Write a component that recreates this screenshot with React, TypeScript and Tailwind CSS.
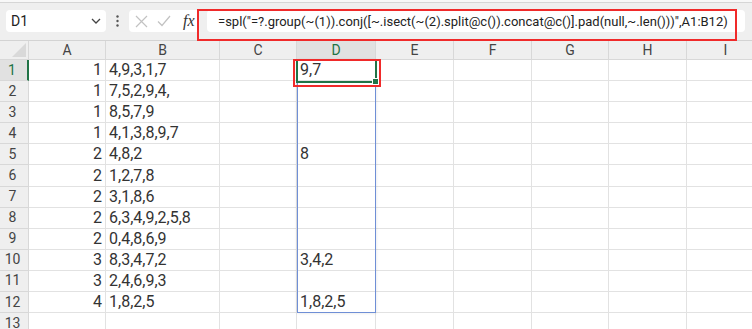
import React from "react";

const cols = ["A", "B", "C", "D", "E", "F", "G", "H", "I"];
const data: [number, string, string][] = [
  [1, "4,9,3,1,7", "9,7"],
  [1, "7,5,2,9,4,", ""],
  [1, "8,5,7,9", ""],
  [1, "4,1,3,8,9,7", ""],
  [2, "4,8,2", "8"],
  [2, "1,2,7,8", ""],
  [2, "3,1,8,6", ""],
  [2, "6,3,4,9,2,5,8", ""],
  [2, "0,4,8,6,9", ""],
  [3, "8,3,4,7,2", "3,4,2"],
  [3, "2,4,6,9,3", ""],
  [4, "1,8,2,5", "1,8,2,5"],
];

const formula =
  '=spl("=?.group(~(1)).conj([~.isect(~(2).split@c()).concat@c()].pad(null,~.len()))",A1:B12)';

export default function App() {
  const rows = [...data.map((d, i) => ({ n: i + 1, d })), { n: 13, d: null as null | [number, string, string] }];
  return (
    <div className="relative w-[752px] h-[329px] overflow-hidden bg-white font-['Roboto','Liberation_Sans',sans-serif]">
      {/* top strip */}
      <div className="h-[2px] bg-[#f8f8f8]" />
      <div className="h-px bg-[#d6d6d6]" />
      {/* formula bar */}
      <div className="h-[37px] bg-[#efefef] flex items-start pt-[7px]">
        <div className="ml-[6px] w-[100px] h-[22px] rounded-[4px] bg-white flex items-center justify-between pl-[5px] pr-[5px]">
          <span className="text-[14px] text-[#222] leading-none">D1</span>
          <svg width="10" height="6" viewBox="0 0 10 6">
            <path d="M1 1 L5 5 L9 1" fill="none" stroke="#444" strokeWidth="1.3" />
          </svg>
        </div>
        <div className="w-[23px] h-[22px] flex items-center justify-center">
          <svg width="3" height="12" viewBox="0 0 3 12">
            <circle cx="1.5" cy="1.5" r="1.2" fill="#555" />
            <circle cx="1.5" cy="6" r="1.2" fill="#555" />
            <circle cx="1.5" cy="10.5" r="1.2" fill="#555" />
          </svg>
        </div>
        <div className="w-[68px] h-[22px] rounded-l-[4px] bg-white flex items-center">
          <svg className="ml-[6px]" width="13" height="13" viewBox="0 0 13 13">
            <path d="M1 1 L12 12 M12 1 L1 12" stroke="#c2c2c2" strokeWidth="1.2" />
          </svg>
          <svg className="ml-[9px]" width="14" height="12" viewBox="0 0 14 12">
            <path d="M1 6.5 L5 10.5 L13 1" fill="none" stroke="#c2c2c2" strokeWidth="1.2" />
          </svg>
          <span className="ml-[12px] text-[16px] italic text-[#333] font-['Liberation_Serif',serif] leading-none">fx</span>
        </div>
        <div className="ml-[10px] w-[538px] h-[22px] rounded-[4px] bg-white flex items-center pl-[11px] overflow-hidden">
          <span className="text-[13px] text-[#222] whitespace-nowrap leading-none">{formula}</span>
        </div>
      </div>
      <div className="h-px bg-[#d3d3d3]" />
      {/* grid */}
      <div className="grid grid-cols-[29px_77px_114px_77px_79px_78px_78px_77px_78px_78px] grid-rows-[19px_repeat(13,21.1px)] w-[765px]">
        <div className="relative bg-[#efefef] border-r border-b border-[#d8d8d8]">
          <svg className="absolute right-[2px] bottom-[2px]" width="14" height="14" viewBox="0 0 14 14">
            <path d="M14 0 L14 14 L0 14 Z" fill="#d9d9d9" />
          </svg>
        </div>
        {cols.map((c) => (
          <div
            key={c}
            className={`flex items-center justify-center pt-[1px] text-[14px] border-r border-b border-[#d8d8d8] ${
              c === "D" ? "bg-[#e1e1e1] text-[#217346]" : "bg-[#efefef] text-[#444]"
            }`}
          >
            {c}
          </div>
        ))}
        {rows.map((r) => (
          <React.Fragment key={r.n}>
            <div
              className={`flex items-center justify-center pr-[3px] text-[14px] border-b ${
                r.n === 1
                  ? "bg-[#e1e1e1] text-[#217346] border-r-2 border-r-[#217346] border-b-[#d8d8d8]"
                  : "bg-[#efefef] text-[#444] border-r border-[#d8d8d8]"
              }`}
            >
              {r.n}
            </div>
            {cols.map((c, ci) => {
              let content = "";
              let align = "justify-start pl-[3px]";
              if (r.d) {
                if (ci === 0) {
                  content = String(r.d[0]);
                  align = "justify-end pr-[3px]";
                } else if (ci === 1) content = r.d[1];
                else if (ci === 3) content = r.d[2];
              }
              return (
                <div
                  key={c}
                  className={`flex items-center ${align} text-[16px] text-[#333] whitespace-nowrap border-r border-b border-[#e2e2e2]`}
                >
                  {content}
                </div>
              );
            })}
          </React.Fragment>
        ))}
      </div>
      {/* spill range (blue) */}
      <div className="absolute left-[297px] top-[60px] w-[79px] h-[253px] border border-[#6f8fd6] shadow-[0_0_3px_rgba(0,0,0,0.12)]" />
      {/* active cell (green) */}
      <div className="absolute left-[296px] top-[59px] w-[81px] h-[24px] border-2 border-[#217346]" />
      <div className="absolute left-[372px] top-[78px] w-[7px] h-[7px] bg-[#217346] border border-white" />
      {/* red annotation boxes */}
      <div className="absolute left-[197px] top-[9px] w-[540px] h-[32px] border-2 border-[#f02a2a]" />
      <div className="absolute left-[293px] top-[59px] w-[88px] h-[28px] border-2 border-[#f02a2a]" />
    </div>
  );
}
